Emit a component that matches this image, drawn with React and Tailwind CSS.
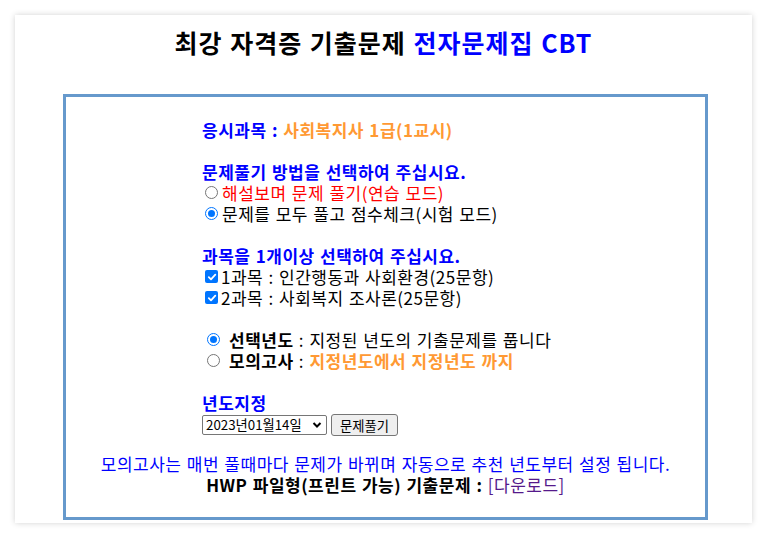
const font = { fontFamily: '"Noto Sans CJK KR", "Noto Sans", sans-serif' };

const Radio = ({ checked, className = '' }) => (
  <span
    className={`inline-flex h-[13px] w-[13px] shrink-0 items-center justify-center rounded-full border ${
      checked ? 'border-[#0075ff]' : 'border-[#767676]'
    } bg-white ${className}`}
  >
    {checked && <span className="h-[7px] w-[7px] rounded-full bg-[#0075ff]" />}
  </span>
);

const Check = ({ className = '' }) => (
  <span
    className={`inline-flex h-[13px] w-[13px] shrink-0 items-center justify-center rounded-[2px] bg-[#0075ff] ${className}`}
  >
    <svg width="10" height="10" viewBox="0 0 10 10">
      <path d="M1.8 5.2 L4 7.4 L8.3 2.6" fill="none" stroke="white" strokeWidth="1.8" strokeLinecap="round" strokeLinejoin="round" />
    </svg>
  </span>
);

const Row = ({ children, className = '' }) => (
  <div className={`flex h-[21px] items-center whitespace-nowrap ${className}`}>{children}</div>
);

export default function App() {
  return (
    <div
      className="min-h-screen bg-white pl-[15px] pt-[15px] text-[17px] leading-[21px] tracking-[0.5px] text-black [word-spacing:1px]"
      style={font}
    >
      <div className="h-[508px] w-[737px] bg-white shadow-[0_0_6px_rgba(0,0,0,0.18)]">
        <h1 className="pt-[11px] text-center text-[25px] font-bold leading-[32px] tracking-[1px]">
          최강 자격증 기출문제 <span className="text-[#0000ff]">전자문제집 CBT</span>
        </h1>

        <div className="ml-[48px] mt-[36px] h-[426px] w-[645px] border-[3px] border-[#6699cc] pt-[22px]">
          <div className="pl-[136px]">
            <Row className="font-bold">
              <span className="text-[#0000ff]">응시과목 :&nbsp;</span>
              <span className="text-[#ff9933]">사회복지사 1급(1교시)</span>
            </Row>
            <Row />
            <Row className="font-bold text-[#0000ff]">문제풀기 방법을 선택하여 주십시요.</Row>
            <Row>
              <Radio className="ml-[3px] mr-[4px]" />
              <span className="text-[#ff0000]">해설보며 문제 풀기(연습 모드)</span>
            </Row>
            <Row>
              <Radio checked className="ml-[3px] mr-[4px]" />
              <span>문제를 모두 풀고 점수체크(시험 모드)</span>
            </Row>
            <Row />
            <Row className="font-bold text-[#0000ff]">과목을 1개이상 선택하여 주십시요.</Row>
            <Row>
              <Check className="ml-[3px] mr-[3px]" />
              <span>1과목 : 인간행동과 사회환경(25문항)</span>
            </Row>
            <Row>
              <Check className="ml-[3px] mr-[3px]" />
              <span>2과목 : 사회복지 조사론(25문항)</span>
            </Row>
            <Row />
            <Row>
              <Radio checked className="ml-[5px] mr-[9px]" />
              <span className="font-bold">선택년도</span>
              <span>&nbsp;: 지정된 년도의 기출문제를 풉니다</span>
            </Row>
            <Row>
              <Radio className="ml-[5px] mr-[9px]" />
              <span className="font-bold">모의고사</span>
              <span>&nbsp;:&nbsp;</span>
              <span className="font-bold text-[#ff9933]">지정년도에서 지정년도 까지</span>
            </Row>
            <Row />
            <Row className="font-bold text-[#0000ff]">년도지정</Row>
            <div className="flex h-[24px] items-center gap-[4px] tracking-normal [word-spacing:0px]">
              <div className="flex h-[20px] w-[125px] items-center justify-between rounded-[2px] border border-[#767676] bg-white pl-[3px] pr-[4px] text-[13.3px]">
                <span className="leading-none">2023년01월14일</span>
                <svg width="10" height="8" viewBox="0 0 10 8">
                  <path d="M1.5 2 L5 5.5 L8.5 2" fill="none" stroke="black" strokeWidth="2" />
                </svg>
              </div>
              <div className="flex h-[22px] items-center rounded-[3px] border border-[#767676] bg-[#efefef] px-[8px] text-[13.3px]">
                문제풀기
              </div>
            </div>
          </div>

          <div className="mt-[16px] text-center">
            <div className="h-[21px] whitespace-nowrap text-[#0000ff]">
              모의고사는 매번 풀때마다 문제가 바뀌며 자동으로 추천 년도부터 설정 됩니다.
            </div>
            <div className="h-[22px] whitespace-nowrap font-bold">
              HWP 파일형(프린트 가능) 기출문제 : <span className="font-normal text-[#551a8b]">[다운로드]</span>
            </div>
          </div>
        </div>
      </div>
    </div>
  );
}
